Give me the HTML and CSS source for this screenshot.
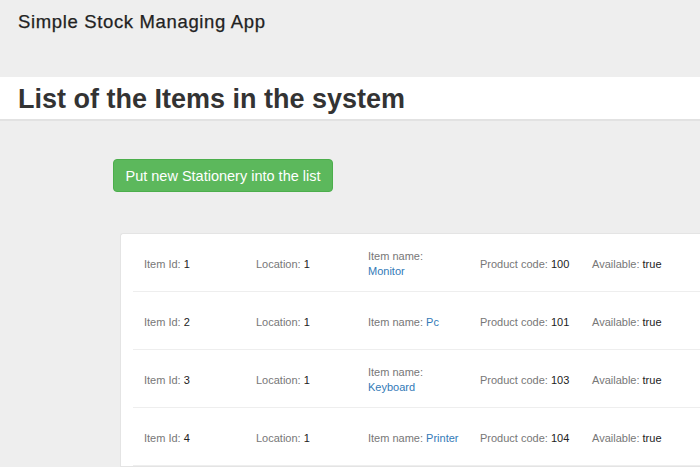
FILE: index.html
```html
<!DOCTYPE html>
<html>
<head>
<meta charset="utf-8">
<link rel="stylesheet" href="styles.css">
</head>
<body>
<header class="topbar">Simple Stock Managing App</header>
<div class="titlebar"><h1>List of the Items in the system</h1></div>
<main class="content">
  <div class="actions"><button class="btn-green">Put new Stationery into the list</button></div>
  <section class="card">
    <div class="row">
      <div class="cell">Item Id: <b>1</b></div>
      <div class="cell">Location: <b>1</b></div>
      <div class="cell">Item name: <a>Monitor</a></div>
      <div class="cell">Product code: <b>100</b></div>
      <div class="cell">Available: <b>true</b></div>
    </div>
    <div class="row">
      <div class="cell">Item Id: <b>2</b></div>
      <div class="cell">Location: <b>1</b></div>
      <div class="cell">Item name: <a>Pc</a></div>
      <div class="cell">Product code: <b>101</b></div>
      <div class="cell">Available: <b>true</b></div>
    </div>
    <div class="row">
      <div class="cell">Item Id: <b>3</b></div>
      <div class="cell">Location: <b>1</b></div>
      <div class="cell">Item name: <a>Keyboard</a></div>
      <div class="cell">Product code: <b>103</b></div>
      <div class="cell">Available: <b>true</b></div>
    </div>
    <div class="row">
      <div class="cell">Item Id: <b>4</b></div>
      <div class="cell">Location: <b>1</b></div>
      <div class="cell">Item name: <a>Printer</a></div>
      <div class="cell">Product code: <b>104</b></div>
      <div class="cell">Available: <b>true</b></div>
    </div>
  </section>
</main>
</body>
</html>
```
FILE: styles.css
```css
html, body {
  margin: 0;
  padding: 0;
  background: #eeeeee;
  font-family: "Liberation Sans", Arial, sans-serif;
  color: #333;
  overflow: hidden;
}
.topbar {
  height: 77px;
  box-sizing: border-box;
  padding: 12px 0 0 18px;
  font-size: 18.5px;
  line-height: 20px;
  letter-spacing: 0.65px;
  color: #222;
  -webkit-text-stroke: 0.25px #222;
}
.titlebar {
  background: #fff;
  height: 42px;
  border-bottom: 2px solid #e2e2e2;
}
.titlebar h1 {
  margin: 0;
  padding: 6px 0 0 18px;
  font-size: 27px;
  line-height: 32px;
  font-weight: bold;
  color: #333;
}
.content {
  padding-top: 38px;
}
.actions {
  padding-left: 113px;
}
.btn-green {
  background: #5cb85c;
  border: 1px solid #4cae4c;
  border-radius: 4px;
  color: #fff;
  font-family: "Liberation Sans", Arial, sans-serif;
  font-size: 14.5px;
  height: 33px;
  width: 220px;
  padding: 0;
  cursor: pointer;
}
.card {
  margin: 41px 0 0 120px;
  background: #fff;
  border: 1px solid #e4e4e4;
  border-right: none;
  border-radius: 3px 0 0 0;
  padding: 0 0 0 12px;
}
.row {
  display: flex;
  align-items: center;
  height: 54px;
  padding-top: 3px;
  border-bottom: 1px solid #eeeeee;
  padding-left: 11px;
  font-size: 11px;
  line-height: 15px;
  color: #777;
}
.cell {
  width: 93px;
  margin-right: 19px;
  flex: none;
}
.cell b {
  font-weight: normal;
  color: #222;
}
.cell a {
  color: #337ab7;
  text-decoration: none;
}
```
